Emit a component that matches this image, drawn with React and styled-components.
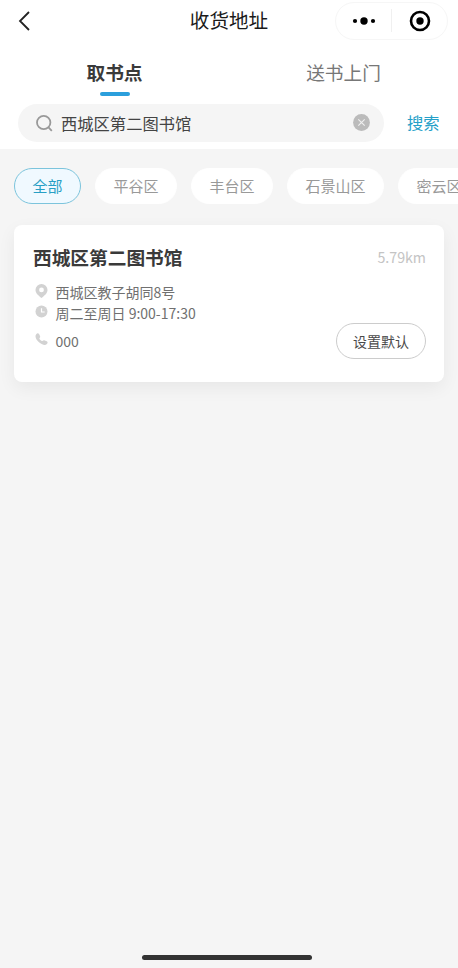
import { useState } from "react";
import styled, { createGlobalStyle } from "styled-components";


const GlobalStyle = createGlobalStyle`
    * {
        box-sizing: border-box;
    }
    body {
        margin: 0;
        background: #f5f5f5;
        font-family: "Noto Sans CJK SC", sans-serif;
    }
    button, input {
        font-family: inherit;
    }
`;

const Page = styled.div`
    display: flex;
    flex-direction: column;
    height: 968px;
    overflow: hidden;
    background: #f5f5f5;
`;

const Header = styled.header`
    height: 149px;
    background: #fff;
`;

const NavBar = styled.div`
    display: grid;
    grid-template-columns: 123px 1fr 123px;
    align-items: center;
    height: 41px;
    padding-right: 10px;
`;

const BackButton = styled.button`
    display: flex;
    width: 40px;
    padding: 0 0 0 18px;
    border: none;
    background: none;
`;

const NavTitle = styled.h1`
    margin: 0;
    padding: 0 0 2px 10px;
    font-size: 19.6px;
    line-height: 39px;
    font-weight: 400;
    text-align: center;
    color: #1a1a1a;
`;

const Capsule = styled.div`
    display: grid;
    grid-template-columns: 1fr 1px 1fr;
    align-items: center;
    justify-items: center;
    width: 113px;
    height: 38px;
    margin-left: 10px;
    border: 1px solid #f6f6f6;
    border-radius: 19px;
`;

const CapsuleLine = styled.span`
    width: 1px;
    height: 23px;
    background: #f0f0f0;
`;

const Tabs = styled.div`
    display: grid;
    grid-template-columns: 1fr 1fr;
    height: 63px;
`;

const Tab = styled.button`
    display: flex;
    flex-direction: column;
    align-items: center;
    padding: 16px 0 0;
    border: none;
    background: none;
    font-size: 18.7px;
    line-height: 30px;
    font-weight: ${(props) => (props.$active ? 700 : 400)};
    color: ${(props) => (props.$active ? "#3a3a3a" : "#777")};
    &::after {
        content: "";
        width: 30px;
        height: 4px;
        margin-top: 5px;
        border-radius: 2px;
        background: ${(props) => (props.$active ? "#2b9fdc" : "transparent")};
    }
`;

const SearchRow = styled.div`
    display: flex;
    align-items: center;
    padding-left: 18px;
`;

const SearchBox = styled.div`
    display: flex;
    align-items: center;
    width: 366px;
    height: 38px;
    padding: 0 14px 1px 18px;
    border-radius: 19px;
    background: #f5f5f5;
`;

const SearchInput = styled.input`
    flex: 1;
    min-width: 0;
    height: 30px;
    padding: 0 0 0 8px;
    border: none;
    outline: none;
    background: none;
    font-size: 16.3px;
    color: #444;
`;

const SearchButton = styled.button`
    padding: 0 0 2px;
    margin-left: 23px;
    border: none;
    background: none;
    font-size: 16.3px;
    color: #24a0c8;
`;

const Districts = styled.div`
    display: flex;
    gap: 14px;
    padding: 19px 0 21px 14px;
    overflow: hidden;
`;

const District = styled.button`
    flex: none;
    height: 36px;
    padding: 0 17.5px 2px;
    border: 1px solid ${(props) => (props.$active ? "#7cc4dc" : "#fff")};
    border-radius: 18px;
    background: ${(props) => (props.$active ? "#f0f9ff" : "#fff")};
    font-size: 15px;
    color: ${(props) => (props.$active ? "#289fc5" : "#999")};
`;

const Card = styled.section`
    height: 157px;
    margin: 0 14px;
    padding: 17px 18px 0 19px;
    border-radius: 8px;
    background: #fff;
    box-shadow: 0 6px 18px rgba(0, 0, 0, 0.06);
`;

const CardHead = styled.div`
    display: flex;
    align-items: center;
    justify-content: space-between;
    height: 30px;
    margin-bottom: 9px;
`;

const CardTitle = styled.h2`
    margin: 0;
    padding-bottom: 1px;
    font-size: 18.7px;
    font-weight: 700;
    color: #3a3a3a;
`;

const Distance = styled.span`
    font-size: 14.2px;
    color: #c4c4c4;
`;

const CardBody = styled.div`
    display: flex;
    justify-content: space-between;
`;

const InfoRow = styled.div`
    display: flex;
    align-items: center;
    height: 21px;
    margin-top: ${(props) => props.$gap || "0"};
    padding-left: 2px;
    font-size: 14px;
    color: #707070;
    svg {
        margin: 0 7.5px 2px 0;
    }
`;

const DefaultButton = styled.button`
    align-self: flex-end;
    width: 90px;
    height: 36px;
    margin-bottom: -8px;
    padding: 0;
    border: 1px solid #ccc;
    border-radius: 18px;
    background: #fff;
    font-size: 14px;
    color: #4a4a4a;
`;

const HomeBar = styled.div`
    width: 170px;
    height: 5px;
    margin: auto auto 8px 142px;
    border-radius: 3px;
    background: #333;
`;


const BackIcon = () => (
    <svg width="12" height="20" viewBox="0 0 12 20" fill="none" stroke="#222" strokeWidth="1.8">
        <path d="M11 1 2 10l9 9" />
    </svg>
);

const MoreIcon = () => (
    <svg width="24" height="10" viewBox="0 0 24 10" fill="#000">
        <circle cx="3" cy="5" r="2.1" />
        <circle cx="12" cy="5" r="3.7" />
        <circle cx="21" cy="5" r="2.1" />
    </svg>
);

const CloseIcon = () => (
    <svg width="22" height="22" viewBox="0 0 22 22">
        <circle cx="11" cy="11" r="9" fill="none" stroke="#000" strokeWidth="2.6" />
        <circle cx="11" cy="11" r="3.7" />
    </svg>
);

const SearchIcon = () => (
    <svg width="17" height="18" viewBox="0 0 17 18" fill="none" stroke="#999" strokeWidth="1.8">
        <circle cx="7.7" cy="8.500" r="6.700" />
        <path d="m12.500 13.300 3.300 3.500" />
    </svg>
);

const ClearIcon = () => (
    <svg width="17" height="17" viewBox="0 0 17 17">
        <circle cx="8.5" cy="8.5" r="8.4" fill="#bbb" />
        <path d="m5.3 5.3 6.400 6.400m0-6.400-6.400 6.400" stroke="#f0f0f0" strokeWidth="1.1" />
    </svg>
);

const PinIcon = () => (
    <svg width="13" height="14" viewBox="0 0 13 14">
        <path
            fill="#d2d2d2"
            fillRule="evenodd"
            d="M6.5 0A6 6 0 0 0 .5 6c0 3.400 3.200 5.700 6 8 2.800-2.300 6-4.600 6-8a6 6 0 0 0-6-6Zm0 3.500a2.400 2.400 0 1 1 0 4.800 2.400 2.400 0 0 1 0-4.800Z"
        />
    </svg>
);

const ClockIcon = () => (
    <svg width="13" height="13" viewBox="0 0 13 13">
        <circle cx="6.5" cy="6.5" r="6" fill="#d2d2d2" />
        <path d="M6.5 3.2v3.800h3.200" fill="none" stroke="#fff" strokeWidth="1.2" />
    </svg>
);

const PhoneIcon = () => (
    <svg width="13" height="13" viewBox="0 0 13 13">
        <path
            fill="#d2d2d2"
            d="M1.200 1.200C2.200 0 3.500.100 4.200 1.200l.8 1.700c.4.900.2 1.500-.5 2.200-.3.500.1 1.100.9 1.900s1.600 1.300 2.100.9c.7-.7 1.400-.9 2.200-.5l2 .9c1.100.600 1.200 1.700.2 2.700-1.400 1.500-4.200 1.300-7.600-1.400C1.100 7-.6 3.500 1.200 1.200Z"
        />
    </svg>
);


const tabs = ["取书点", "送书上门"];
const districts = ["全部", "平谷区", "丰台区", "石景山区", "密云区"];

const App = () => {
    const [activeTab, setActiveTab] = useState("取书点");
    const [district, setDistrict] = useState("全部");
    const [keyword, setKeyword] = useState("西城区第二图书馆");

    return (
        <Page>
            <GlobalStyle />
            <Header>
                <NavBar>
                    <BackButton aria-label="返回">
                        <BackIcon />
                    </BackButton>
                    <NavTitle>收货地址</NavTitle>
                    <Capsule>
                        <MoreIcon />
                        <CapsuleLine />
                        <CloseIcon />
                    </Capsule>
                </NavBar>

                <Tabs>
                    {tabs.map((tab) => (
                        <Tab key={tab} $active={tab === activeTab} onClick={() => setActiveTab(tab)}>
                            {tab}
                        </Tab>
                    ))}
                </Tabs>

                <SearchRow>
                    <SearchBox>
                        <SearchIcon />
                        <SearchInput
                            value={keyword}
                            onChange={(e) => setKeyword(e.target.value)}
                        />
                        <ClearIcon />
                    </SearchBox>
                    <SearchButton>搜索</SearchButton>
                </SearchRow>
            </Header>

            <Districts>
                {districts.map((name) => (
                    <District key={name} $active={name === district} onClick={() => setDistrict(name)}>
                        {name}
                    </District>
                ))}
            </Districts>

            <Card>
                <CardHead>
                    <CardTitle>西城区第二图书馆</CardTitle>
                    <Distance>5.79km</Distance>
                </CardHead>
                <CardBody>
                    <div>
                        <InfoRow>
                            <PinIcon />
                            西城区教子胡同8号
                        </InfoRow>
                        <InfoRow>
                            <ClockIcon />
                            周二至周日 9:00-17:30
                        </InfoRow>
                        <InfoRow $gap="7px">
                            <PhoneIcon />
                            000
                        </InfoRow>
                    </div>
                    <DefaultButton>设置默认</DefaultButton>
                </CardBody>
            </Card>

            <HomeBar />
        </Page>
    );
};

export default App;
